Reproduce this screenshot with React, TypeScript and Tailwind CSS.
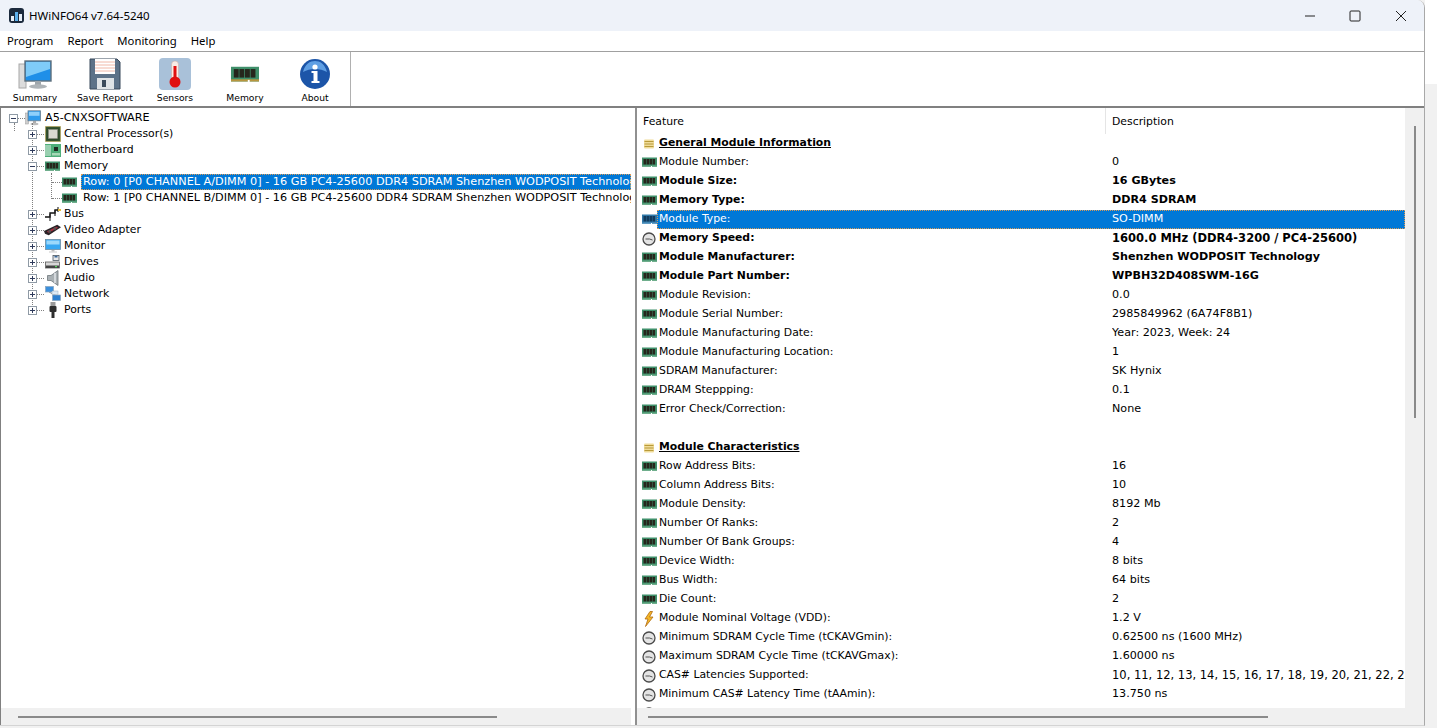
import React from 'react'

const font = "font-['DejaVu_Sans',sans-serif]"
const uiFont = "font-['Noto_Sans',sans-serif]"

function Ram({ blue, gold, className = 'w-[15px] h-[11px]' }: { blue?: boolean; gold?: boolean; className?: string }) {
  const body = blue ? '#2f78a8' : '#3f8f6a'
  const chip = blue ? '#123a5c' : '#26261c'
  const edge = blue ? '#5f9cc4' : gold ? '#b8963e' : '#6fae8c'
  return (
    <svg viewBox="0 0 15 11" preserveAspectRatio="none" className={className}>
      <rect x="0" y="0.5" width="15" height="9.5" fill={body} />
      {[1.5, 4.5, 7.5, 10.5].map((x) => (
        <rect key={x} x={x} y="2" width="2.6" height="5.5" fill={chip} />
      ))}
      <rect x="0" y="8.6" width="15" height="1.4" fill={edge} />
      <rect x="9" y="9" width="1" height="2" fill="#fff" />
    </svg>
  )
}

function Clock() {
  return (
    <svg viewBox="0 0 14 14" className="w-[14px] h-[14px]">
      <circle cx="7" cy="7" r="6" fill="#e4e4e4" stroke="#4a4a4a" strokeWidth="1.3" />
      <path d="M3.5 7H7.5L10.5 8" stroke="#555" strokeWidth="1" fill="none" />
    </svg>
  )
}

function Bolt() {
  return (
    <svg viewBox="0 0 12 16" className="w-[12px] h-[16px]">
      <path d="M7 0.5L2 8H5L2.5 15.5L10 6H6.5L9.5 0.5Z" fill="#f4b728" stroke="#b06a10" strokeWidth="0.8" />
    </svg>
  )
}

function Section() {
  return (
    <svg viewBox="0 0 12 10" className="w-[12px] h-[10px]">
      <rect x="1" y="0.5" width="10" height="9" rx="1" fill="#f0dc9a" />
      <path d="M1.5 2.5H10.5M1.5 5H10.5M1.5 7.5H10.5" stroke="#b89a3a" strokeWidth="1.1" />
    </svg>
  )
}

function Computer({ size = 'w-[16px] h-[16px]' }: { size?: string }) {
  return (
    <svg viewBox="0 0 16 16" className={size}>
      <rect x="0" y="3" width="3.5" height="11" fill="#cfcfcf" stroke="#9a9a9a" strokeWidth="0.5" />
      <rect x="3" y="0.8" width="12.5" height="10" fill="#2f9bec" stroke="#6c7f8f" strokeWidth="0.8" />
      <rect x="4" y="1.8" width="10.5" height="4" fill="#8fd0fa" />
      <rect x="8" y="11" width="3" height="2" fill="#aaa" />
      <ellipse cx="9.5" cy="14" rx="4" ry="1.2" fill="#bdbdbd" />
    </svg>
  )
}

function Cpu() {
  return (
    <svg viewBox="0 0 16 16" className="w-[16px] h-[16px]">
      <rect x="0.5" y="0.5" width="15" height="15" fill="#3f5a34" stroke="#b59b3c" strokeWidth="1" strokeDasharray="1 1" />
      <rect x="1.5" y="1.5" width="13" height="13" fill="#2d4a2a" />
      <rect x="3.5" y="3.5" width="9" height="9" fill="#d8d8d0" stroke="#8c8c84" strokeWidth="0.6" />
    </svg>
  )
}

function Board() {
  return (
    <svg viewBox="0 0 16 13" className="w-[16px] h-[13px]">
      <rect x="0" y="0" width="16" height="13" fill="#4fae7a" />
      <path d="M1 1V12M3 1V12M5 1V12" stroke="#e4f1e6" strokeWidth="1" />
      <rect x="9" y="3" width="4" height="4" fill="#1f2a22" />
      <rect x="7" y="9" width="8" height="2.5" fill="#a6d8b6" />
    </svg>
  )
}

function Bus() {
  return (
    <svg viewBox="0 0 16 14" className="w-[16px] h-[14px]">
      <path d="M0 10H5V6H10V3H15" stroke="#111" strokeWidth="1.4" fill="none" />
      <path d="M5 14V7M10 9V3M13 5V0" stroke="#222" strokeWidth="1.1" fill="none" />
      <rect x="13" y="2" width="3" height="2" fill="#e4b838" />
    </svg>
  )
}

function Gpu() {
  return (
    <svg viewBox="0 0 18 12" className="w-[18px] h-[12px]">
      <path d="M0 7L14 0.5L18 3L5 11.5L1 10Z" fill="#2a2226" />
      <path d="M3 7.5L13 2.5L15 3.5L5 9Z" fill="#a83240" />
      <circle cx="6" cy="7.5" r="1.4" fill="#555" />
      <circle cx="11.5" cy="4.5" r="1.4" fill="#555" />
    </svg>
  )
}

function Monitor() {
  return (
    <svg viewBox="0 0 16 14" className="w-[16px] h-[14px]">
      <rect x="0.5" y="0.5" width="15" height="10" fill="#37a7f2" stroke="#6e8da3" strokeWidth="0.8" />
      <rect x="1.5" y="1.5" width="13" height="4" fill="#9bd8fb" />
      <rect x="6.5" y="11" width="3" height="1.5" fill="#bbb" />
      <rect x="4" y="12.5" width="8" height="1" fill="#c9c9c9" />
    </svg>
  )
}

function Drive() {
  return (
    <svg viewBox="0 0 15 14" className="w-[15px] h-[14px]">
      <rect x="8" y="0.5" width="6" height="5" fill="#e8e8e8" stroke="#4a5560" strokeWidth="0.8" />
      <rect x="9.5" y="1" width="3" height="1.5" fill="#38699c" />
      <rect x="0.5" y="7" width="14" height="6" fill="#d8d8d8" stroke="#5a5a5a" strokeWidth="0.8" />
      <rect x="1" y="10.5" width="13" height="2.5" fill="#444" />
      <rect x="10" y="11" width="2" height="1.2" fill="#56d65c" />
    </svg>
  )
}

function Speaker() {
  return (
    <svg viewBox="0 0 14 16" className="w-[14px] h-[16px]">
      <path d="M1.5 5.5H5L12 0.5V15.5L5 10.5H1.5Z" fill="#a9b0b4" stroke="#6f777c" strokeWidth="0.8" />
      <path d="M9 3V13" stroke="#dfe3e6" strokeWidth="1.6" />
    </svg>
  )
}

function Network() {
  return (
    <svg viewBox="0 0 16 16" className="w-[16px] h-[16px]">
      <path d="M4 6L12 10" stroke="#888" strokeWidth="1" />
      <rect x="0.5" y="0.5" width="8" height="5.5" fill="#3b8fdc" stroke="#8aa4bc" strokeWidth="0.7" />
      <rect x="7.5" y="9" width="8" height="5.5" fill="#2c7fd0" stroke="#8aa4bc" strokeWidth="0.7" />
      <rect x="7" y="5" width="6" height="3.5" fill="#dce9f5" stroke="#9ab" strokeWidth="0.5" />
    </svg>
  )
}

function Plug() {
  return (
    <svg viewBox="0 0 10 16" className="w-[10px] h-[16px]">
      <rect x="2.5" y="0" width="5" height="4" fill="#9a9a9a" />
      <rect x="1.5" y="4" width="7" height="6" rx="1" fill="#2e2e2e" />
      <rect x="3.5" y="10" width="3" height="6" fill="#2e2e2e" />
    </svg>
  )
}

function Expander({ open }: { open?: boolean }) {
  return (
    <div className="relative w-[9px] h-[9px] border border-[#8f9aa5] bg-white shrink-0 flex items-center justify-center">
      <div className="w-[5px] h-px bg-[#2f3b5c]" />
      {!open && <div className="absolute w-px h-[5px] bg-[#2f3b5c]" />}
    </div>
  )
}

function Dash({ w }: { w: string }) {
  return <div className={`h-px border-t border-dotted border-[#808080] shrink-0 ${w}`} />
}

const treeItems: { label: string; icon: React.ReactNode; open?: boolean }[] = [
  { label: 'Central Processor(s)', icon: <Cpu /> },
  { label: 'Motherboard', icon: <Board /> },
  { label: 'Memory', icon: <Ram />, open: true },
  { label: 'Bus', icon: <Bus /> },
  { label: 'Video Adapter', icon: <Gpu /> },
  { label: 'Monitor', icon: <Monitor /> },
  { label: 'Drives', icon: <Drive /> },
  { label: 'Audio', icon: <Speaker /> },
  { label: 'Network', icon: <Network /> },
  { label: 'Ports', icon: <Plug /> },
]

const ramRows = [
  'Row: 0 [P0 CHANNEL A/DIMM 0] - 16 GB PC4-25600 DDR4 SDRAM Shenzhen WODPOSIT Technology',
  'Row: 1 [P0 CHANNEL B/DIMM 0] - 16 GB PC4-25600 DDR4 SDRAM Shenzhen WODPOSIT Technology',
]

function Tree() {
  return (
    <div className="relative flex-1 pt-[1px] pl-[8px] overflow-hidden mt-[1px]">
      <div className="absolute left-[13px] top-[14px] h-[8px] border-l border-dotted border-[#808080]" />
      <div className="absolute left-[31px] top-[14px] h-[188px] border-l border-dotted border-[#808080]" />
      <div className="absolute left-[50px] top-[64px] h-[26px] border-l border-dotted border-[#808080]" />
      <div className="h-4 flex items-center">
        <Expander open />
        <Dash w="w-[7px]" />
        <div className="w-[16px] flex justify-center"><Computer /></div>
        <span className="ml-[4px] text-[11.2px]">A5-CNXSOFTWARE</span>
      </div>
      {treeItems.map((item) => (
        <React.Fragment key={item.label}>
          <div className="h-4 flex items-center pl-[19px]">
            <Expander open={item.open} />
            <Dash w="w-[7px]" />
            <div className="w-[17px] h-4 flex items-center justify-center">{item.icon}</div>
            <span className="ml-[3px]">{item.label}</span>
          </div>
          {item.open &&
            ramRows.map((r, i) => (
              <div key={r} className="h-4 flex items-center pl-[43px] whitespace-nowrap">
                <Dash w="w-[10px]" />
                <div className="w-[15px] shrink-0 flex justify-center"><Ram /></div>
                <span
                  className={`ml-[4px] pl-[2px] h-4 leading-4 flex-1 overflow-hidden text-[11.25px] ${
                    i === 0 ? 'bg-[#0078d7] text-white outline-1 outline-dotted outline-[#d89a58] -outline-offset-1' : ''
                  }`}
                >
                  {r}
                </span>
              </div>
            ))}
        </React.Fragment>
      ))}
    </div>
  )
}

type Row = {
  f?: string
  d?: string
  bold?: boolean
  wide?: boolean
  icon?: 'ram' | 'clock' | 'bolt' | 'sec'
  sel?: boolean
}

const rows: Row[] = [
  { f: 'General Module Information', icon: 'sec' },
  { f: 'Module Number:', d: '0' },
  { f: 'Module Size:', d: '16 GBytes', bold: true },
  { f: 'Memory Type:', d: 'DDR4 SDRAM', bold: true },
  { f: 'Module Type:', d: 'SO-DIMM', sel: true },
  { f: 'Memory Speed:', d: '1600.0 MHz (DDR4-3200 / PC4-25600)', bold: true, wide: true, icon: 'clock' },
  { f: 'Module Manufacturer:', d: 'Shenzhen WODPOSIT Technology', bold: true },
  { f: 'Module Part Number:', d: 'WPBH32D408SWM-16G', bold: true },
  { f: 'Module Revision:', d: '0.0' },
  { f: 'Module Serial Number:', d: '2985849962 (6A74F8B1)' },
  { f: 'Module Manufacturing Date:', d: 'Year: 2023, Week: 24' },
  { f: 'Module Manufacturing Location:', d: '1' },
  { f: 'SDRAM Manufacturer:', d: 'SK Hynix' },
  { f: 'DRAM Steppping:', d: '0.1' },
  { f: 'Error Check/Correction:', d: 'None' },
  {},
  { f: 'Module Characteristics', icon: 'sec' },
  { f: 'Row Address Bits:', d: '16' },
  { f: 'Column Address Bits:', d: '10' },
  { f: 'Module Density:', d: '8192 Mb' },
  { f: 'Number Of Ranks:', d: '2' },
  { f: 'Number Of Bank Groups:', d: '4' },
  { f: 'Device Width:', d: '8 bits' },
  { f: 'Bus Width:', d: '64 bits' },
  { f: 'Die Count:', d: '2' },
  { f: 'Module Nominal Voltage (VDD):', d: '1.2 V', icon: 'bolt' },
  { f: 'Minimum SDRAM Cycle Time (tCKAVGmin):', d: '0.62500 ns (1600 MHz)', icon: 'clock' },
  { f: 'Maximum SDRAM Cycle Time (tCKAVGmax):', d: '1.60000 ns', icon: 'clock' },
  { f: 'CAS# Latencies Supported:', d: '10, 11, 12, 13, 14, 15, 16, 17, 18, 19, 20, 21, 22, 23, 24', wide: true, icon: 'clock' },
  { f: 'Minimum CAS# Latency Time (tAAmin):', d: '13.750 ns', icon: 'clock' },
  { icon: 'clock' },
]

function RowIcon({ row }: { row: Row }) {
  if (row.icon === 'clock') return <Clock />
  if (row.icon === 'bolt') return <Bolt />
  if (row.icon === 'sec') return <Section />
  return <Ram blue={row.sel} />
}

function List() {
  return (
    <div className="h-[600px] overflow-hidden pl-[4px]">
      <div className="h-[26px] flex items-center">
        <div className="w-[465px] pl-[2px] pt-[2px] h-full flex items-center border-r border-[#e5e5e5]">Feature</div>
        <div className="pl-[6px] pt-[2px]">Description</div>
      </div>
      {rows.map((row, i) => {
        const header = row.icon === 'sec'
        return (
          <div key={i} className="h-[19px] flex items-center whitespace-nowrap">
            <div className="w-[16px] shrink-0 flex justify-center">{(row.f || row.icon) && <RowIcon row={row} />}</div>
            <div
              className={`flex-1 min-w-0 h-full flex items-center ${
                row.sel ? 'bg-[#0078d7] text-white outline-1 outline-dotted outline-[#d89a58] -outline-offset-1' : ''
              }`}
            >
              <div
                className={`w-[455px] shrink-0 pl-[2px] ${row.bold || header ? 'font-bold' : ''} ${
                  header ? 'underline' : ''
                }`}
              >
                {row.f}
              </div>
              <div
                className={`flex-1 min-w-0 overflow-hidden ${row.bold ? 'font-bold' : ''} ${
                  row.wide ? 'text-[11.5px]' : 'text-[11.15px]'
                }`}
              >
                {row.d}
              </div>
            </div>
          </div>
        )
      })}
    </div>
  )
}

const tools: { label: string; icon: React.ReactNode }[] = [
  {
    label: 'Summary',
    icon: (
      <svg viewBox="0 0 34 32" className="w-[34px] h-[32px]">
        <rect x="1" y="6" width="7" height="24" fill="#dcdcdc" stroke="#a8a8a8" />
        <rect x="7" y="3" width="26" height="20" fill="#1f8fe8" stroke="#5f6f7c" strokeWidth="1.4" />
        <path d="M8 4H32V11L8 19Z" fill="#7fcbf8" />
        <rect x="17" y="23" width="6" height="4" fill="#9fa6ab" />
        <ellipse cx="20" cy="28.5" rx="9" ry="2.2" fill="#aeb4b8" />
      </svg>
    ),
  },
  {
    label: 'Save Report',
    icon: (
      <svg viewBox="0 0 32 32" className="w-[32px] h-[32px]">
        <path d="M1 1H28L31 4V31H1Z" fill="#5d7288" stroke="#39485a" />
        <rect x="6" y="1" width="20" height="15" fill="#fff" />
        <path d="M6 4H26M6 7H26M6 10H26M6 13H26" stroke="#f0b8a8" strokeWidth="1" />
        <rect x="8" y="20" width="17" height="11" fill="#dfe3e6" />
        <rect x="13" y="22" width="4" height="7" fill="#3b4a5a" />
      </svg>
    ),
  },
  {
    label: 'Sensors',
    icon: (
      <svg viewBox="0 0 32 32" className="w-[32px] h-[32px]">
        <rect x="0" y="0" width="32" height="32" rx="4" fill="#a9c1d9" />
        <rect x="12.5" y="3" width="7" height="21" rx="3.5" fill="#f8ece6" stroke="#c9a8a0" strokeWidth="0.5" />
        <rect x="14.5" y="8" width="3" height="16" fill="#e01010" />
        <circle cx="16" cy="24" r="5.5" fill="#e01010" />
      </svg>
    ),
  },
  {
    label: 'Memory',
    icon: <Ram gold className="w-[28px] h-[17px]" />,
  },
  {
    label: 'About',
    icon: (
      <svg viewBox="0 0 30 30" className="w-[30px] h-[30px]">
        <circle cx="15" cy="15" r="15" fill="#1c55a8" />
        <path d="M3 13C5 5 10 2 15 2C20 2 25 5 27 13C20 9 10 9 3 13Z" fill="#5f9fe4" />
        <circle cx="15" cy="8" r="2.6" fill="#fff" />
        <path d="M11.5 12H17.5V22H19.5V24H11.5V22H13.5V14H11.5Z" fill="#fff" />
      </svg>
    ),
  },
]

function HBar({ left, width }: { left: string; width: string }) {
  return (
    <div className={`h-[17px] shrink-0 bg-[#f0f0f0] flex items-center ${left}`}>
      <div className={`h-[2px] bg-[#8a8a8a] ${width}`} />
    </div>
  )
}

export default function App() {
  return (
    <div className={`h-screen w-full overflow-hidden flex bg-[#f1f1f1] text-[10.85px] text-black ${font}`}>
      <div className="w-[1425px] h-[726px] shrink-0 flex flex-col bg-white border-r border-b border-r-[#a8a8a8] border-b-[#d4d4d4] rounded-tr-lg overflow-hidden">
        <div className="h-[31px] shrink-0 bg-[#eef2f9] flex items-center">
          <div className="ml-[9px] w-[15px] h-[15px] rounded-[3px] bg-[#1b2a3d] flex items-end justify-center gap-px pb-[2px]">
            <div className="w-[3px] h-[5px] bg-[#e6eef8]" />
            <div className="w-[3px] h-[9px] bg-[#5cb0ec]" />
            <div className="w-[3px] h-[7px] bg-[#e6eef8]" />
          </div>
          <span className={`ml-[5px] text-[11.5px] ${uiFont}`}>HWiNFO64 v7.64-5240</span>
          <div className="ml-auto flex items-center">
            <svg viewBox="0 0 12 12" className="w-[12px] h-[12px] mr-[33px]"><path d="M1 6H11" stroke="#222" strokeWidth="1" /></svg>
            <svg viewBox="0 0 12 12" className="w-[12px] h-[12px] mr-[34px]"><rect x="1" y="1" width="10" height="10" rx="1" fill="none" stroke="#222" strokeWidth="1" /></svg>
            <svg viewBox="0 0 12 12" className="w-[12px] h-[12px] mr-[17px]"><path d="M1 1L11 11M11 1L1 11" stroke="#222" strokeWidth="1" /></svg>
          </div>
        </div>
        <div className={`h-[20px] shrink-0 flex items-center pl-[7px] gap-[14px] text-[11.3px] ${uiFont}`}>
          <span>Program</span>
          <span>Report</span>
          <span>Monitoring</span>
          <span>Help</span>
        </div>
        <div className="h-[57px] shrink-0 border-t border-[#a0a0a0] border-b-2 border-b-[#808080] flex">
          <div className="flex w-[351px] border-r border-[#b0b0b0]">
            {tools.map((t) => (
              <div key={t.label} className="w-[70px] flex flex-col items-center">
                <div className="h-[39px] flex items-center justify-center pt-[5px]">{t.icon}</div>
                <span className="text-[9.2px] whitespace-nowrap">{t.label}</span>
              </div>
            ))}
          </div>
        </div>
        <div className="flex-1 min-h-0 flex">
          <div className="w-[631px] flex flex-col border-l border-[#808080]">
            <Tree />
            <HBar left="pl-[17px]" width="w-[479px]" />
          </div>
          <div className="w-[4px] bg-white" />
          <div className="flex-1 min-w-0 flex border-l-2 border-[#909090]">
            <div className="w-[768px] flex flex-col">
              <List />
              <HBar left="pl-[11px]" width="w-[620px]" />
            </div>
            <div className="flex-1 bg-[#f0f0f0] pt-[18px] flex justify-center">
              <div className="w-[2px] h-[292px] bg-[#8a8a8a]" />
            </div>
          </div>
        </div>
      </div>
      <div className="flex-1 flex flex-col">
        <div className="h-[84px] bg-white" />
      </div>
    </div>
  )
}
